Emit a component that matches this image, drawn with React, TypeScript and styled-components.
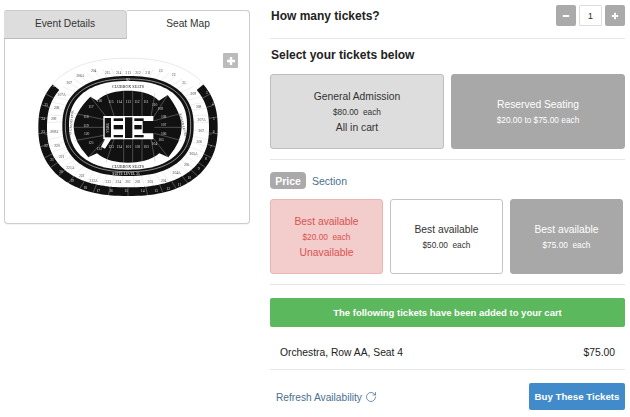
import React from "react";
import styled, { createGlobalStyle } from "styled-components";
import { RotateCw } from "lucide-react";

const Global = createGlobalStyle`
  html, body { margin: 0; padding: 0; background: #fff; }
  body { font-family: "Liberation Sans", Arial, sans-serif; color: #333; }
`;

const Page = styled.div`
  width: 630px; height: 417px; overflow: hidden; position: relative;
  display: flex; align-items: flex-start; gap: 20px; padding: 0 5px 0 4px; box-sizing: border-box;
`;
const Left = styled.div`width: 246px; padding-top: 10px; flex: none;`;
const Tabs = styled.div`display: flex; height: 29px;`;
const Tab = styled.div<{ $active?: boolean }>`
  flex: 1; display: flex; align-items: center; justify-content: center;
  font-size: 10.2px; box-sizing: border-box; color: #333;
  background: ${p => (p.$active ? "#fff" : "#ddd")};
  border: 1px solid #ccc;
  border-bottom: ${p => (p.$active ? "none" : "1px solid #bbb")};
  border-left: ${p => (p.$active ? "none" : "0")};
  border-radius: ${p => (p.$active ? "0 4px 0 0" : "3px 4px 0 0")};
  padding-bottom: 3px;
`;
const Panel = styled.div`
  height: 185px; border: 1px solid #ccc; border-top: none; border-radius: 0 0 4px 4px;
  position: relative; box-sizing: border-box;
  padding: 11px 0 0 26px;
  box-shadow: 0 1px 1px rgba(0,0,0,.05);
`;
const MapSvg = styled.svg`display: block; filter: blur(0.35px);`;
const Zoom = styled.div`
  position: absolute; left: 218px; top: 14px; width: 15px; height: 15px;
  background: #bbb; border-radius: 1px;
  color: #fff; display: flex; align-items: center; justify-content: center;
`;
const Right = styled.div`width: 355px; flex: none;`;
const HeadRow = styled.div`
  display: flex; align-items: center; justify-content: space-between;
  border-bottom: 1px solid #e6e6e6; padding-bottom: 8px; box-sizing: content-box; height: 29px; padding-top: 1px;
`;
const H = styled.h3`margin: 1px 0 0; font-size: 12px; line-height: 15px; font-weight: bold; color: #222; padding-left: 1px;`;
const Stepper = styled.div`display: flex; gap: 3px; align-items: center;`;
const StepBtn = styled.div`
  width: 20px; height: 21px; background: #aaa; border-radius: 2px; display: flex;
  align-items: center; justify-content: center;
`;
const StepVal = styled.div`
  width: 23px; height: 21px; border: 1px solid #ddd; box-sizing: border-box; display: flex;
  align-items: center; justify-content: center; font-size: 9.5px; color: #333; border-radius: 1px;
`;
const Sub = styled.div`padding: 8px 0 11px; height: 16px;`;
const CardRow = styled.div<{ $gap: number }>`display: flex; gap: ${p => p.$gap}px;`;
const Card = styled.div<{ $kind: "light" | "gray" | "pink" | "white"; $w: number }>`
  width: ${p => p.$w}px; height: 75px; box-sizing: border-box; border-radius: 3px; flex: none;
  display: flex; flex-direction: column; align-items: center; justify-content: center; padding-top: 2px;
  border: 1px solid ${p => ({ light: "#bdbdbd", gray: "#a8a8a8", pink: "#ecb5b5", white: "#c4c4c4" }[p.$kind])};
  background: ${p => ({ light: "#ddd", gray: "#a8a8a8", pink: "#f3cccc", white: "#fff" }[p.$kind])};
  color: ${p => ({ light: "#333", gray: "#fff", pink: "#d9534f", white: "#333" }[p.$kind])};
`;
const CardTitle = styled.div`font-size: 10.3px; line-height: 16px;`;
const CardPrice = styled.div`font-size: 8.3px; line-height: 15px; white-space: pre;`;
const CardNote = styled.div`font-size: 10.3px; line-height: 16px;`;
const Rule = styled.div<{ $top: number; $bottom: number }>`
  height: 1px; background: #e6e6e6; margin: ${p => p.$top}px 0 ${p => p.$bottom}px;
`;
const Pills = styled.div`display: flex; align-items: center; gap: 6px; height: 17px; margin-bottom: 10px;`;
const Pill = styled.div`
  width: 36px; height: 17px; background: #aaa; color: #fff; font-size: 10.5px; font-weight: bold; border-radius: 4px;
  display: flex; align-items: center; justify-content: center;
`;
const LinkText = styled.span`font-size: 10.5px; color: #4a6f8f;`;
const Banner = styled.div`
  height: 29px; background: #5cb85c; color: #fff; font-size: 9.5px; font-weight: bold; border-radius: 2px;
  display: flex; align-items: center; justify-content: center;
`;
const Line = styled.div`
  display: flex; align-items: center; justify-content: space-between; padding: 8px 10px 0; box-sizing: border-box;
  font-size: 10.3px; color: #222; border-bottom: 1px solid #e6e6e6; height: 43px;
`;
const Foot = styled.div`
  display: flex; align-items: center; justify-content: space-between; margin-top: 13px; padding-left: 6px;
`;
const Refresh = styled.div`display: flex; align-items: center; gap: 3px; padding-top: 1px; font-size: 10.2px; color: #4a6f8f;`;
const Buy = styled.div`
  width: 96px; height: 27px; background: #428bca; color: #fff; font-size: 9.7px; font-weight: bold;
  border-radius: 2px; display: flex; align-items: center; justify-content: center;
`;

const sgn = (v: number) => (v < 0 ? -1 : 1);
const pt = (a: number, b: number, t: number, cx = 291, cy = 232, n = 2.35): [number, number] => {
  const c = Math.cos(t), s = Math.sin(t);
  return [cx + a * sgn(c) * Math.pow(Math.abs(c), 2 / n), cy + b * sgn(s) * Math.pow(Math.abs(s), 2 / n)];
};
const arc = (a: number, b: number, t0: number, t1: number, cx = 291, cy = 232) => {
  const out: string[] = [];
  const N = 120;
  for (let i = 0; i <= N; i++) {
    const [x, y] = pt(a, b, t0 + ((t1 - t0) * i) / N, cx, cy);
    out.push(`${i ? "L" : "M"}${x.toFixed(1)} ${y.toFixed(1)}`);
  }
  return out.join("");
};
const deg = (d: number) => (d * Math.PI) / 180;

const outer: [number, number, string][] = [
  [70,112,"26"],[46,167,"25"],[36,210,"24"],[36,250,"23"],[45,292,"22"],[63,333,"21"],[90,368,"20"],[123,397,"19"],[163,417,"18"],
  [202,426,"17"],[240,426,"16"],[285,426,"15"],[335,426,"14"],[375,426,"13"],[412,420,"12"],[445,408,"11"],[475,388,"10"],[503,360,"9"],
  [525,330,"8"],[540,295,"7"],[548,250,"6"],[548,210,"5"],[545,165,"4"],[527,133,"3"],[505,105,"2"],
];
const band: [number, number, string][] = [
  [188,65,"204"],[230,72,"215"],[263,72,"214"],[292,72,"213"],[321,72,"212"],[351,72,"211"],[389,65,"23"],[428,78,"22"],[459,103,"21"],
  [148,80,"206A"],[115,102,"207"],[92,137,"207A"],[77,176,"208"],[68,211,"209"],[70,250,"209A"],[78,290,"220"],[92,325,"221"],[118,356,"221A"],
  [152,382,"222"],[188,395,"222A"],[232,398,"223"],[262,398,"224"],[291,398,"201"],[320,398,"202"],[358,398,"203"],[398,395,"204"],
  [437,373,"204A"],[467,348,"205"],[488,314,"205A"],[505,279,"206"],[511,245,"207"],[512,212,"207A"],[503,175,"208"],[487,135,"209"],
];
const bowl: [number, number, string][] = [
  [205,155,"116"],[240,158,"115"],[265,158,"114"],[292,158,"113"],[318,158,"112"],[345,158,"111"],[371,168,"110"],[388,180,"109"],
  [398,203,"108"],[398,227,"107"],[398,255,"106"],[390,273,"105"],[370,285,"104"],[345,295,"103"],[320,295,"102"],[292,295,"101"],
  [265,295,"124"],[240,295,"123"],[205,300,"122"],[180,283,"121"],[167,255,"120"],[165,230,"119"],[165,203,"118"],[180,173,"117"],
];
const spokes: [number, number, number, number][] = [
  [225,200,178,140],[225,210,130,190],[220,232,128,232],[225,255,130,272],[225,265,172,322],
  [250,200,225,125],[278,200,278,122],[305,200,305,122],[333,200,333,122],[360,200,372,130],
  [365,205,410,135],[370,212,452,190],[370,232,452,232],[370,250,452,272],[365,262,412,322],
  [250,265,225,338],[278,265,278,338],[305,265,305,338],[333,265,333,338],[360,265,372,335],
];

const Map = () => (
  <MapSvg width={200} height={150} viewBox="0 0 600 450" fontFamily="'Liberation Serif', serif">
    <path d={arc(269, 207, deg(215), deg(325), 291, 232)} fill="none" stroke="#ddd" strokeWidth={2} />
    {Array.from({ length: 60 }).map((_, i) => {
      const t = deg(i * 6 + 3);
      const [x0, y0] = pt(196, 150, t, 291, 228);
      const [x1, y1] = pt(242, 180, t, 291, 232);
      return <line key={i} x1={x0} y1={y0} x2={x1} y2={y1} stroke="#ddd" strokeWidth={1.5} />;
    })}
    <path d={arc(256, 193, deg(-35), deg(215), 291, 232)} fill="none" stroke="#111" strokeWidth={26} />
    {Array.from({ length: 25 }).map((_, i) => {
      const t = deg(-35 + ((250 * (i + 1)) / 26));
      const [x0, y0] = pt(243, 180, t);
      const [x1, y1] = pt(269, 206, t);
      return <line key={i} x1={x0} y1={y0} x2={x1} y2={y1} stroke="#999" strokeWidth={1.5} />;
    })}
    {outer.map(([x, y, s]) => <text key={s + x} x={x} y={y} fontSize={11} fill="#ddd" textAnchor="middle">{s}</text>)}
    {band.map(([x, y, s]) => <text key={s + x} x={x} y={y} fontSize={11} fill="#444" textAnchor="middle">{s}</text>)}
    <path d={arc(197, 150, 0, Math.PI * 2, 291, 228)} fill="#111" />
    <path d={arc(188, 139, 0, Math.PI * 2, 291, 226)} fill="none" stroke="#fff" strokeWidth={1.6} />
    <path d={arc(177, 133, 0, Math.PI * 2, 291, 226)} fill="#fff" />
    <path d="M178 140L198 152C222 128 260 122 291 122C322 122 360 128 384 152L410 135Q452 190 452 232Q452 275 412 322L385 310C360 332 322 338 291 338C260 338 222 332 198 310L172 322Q128 275 128 232Q128 190 178 140Z" fill="#111" />
    {spokes.map(([a, b, c, d], i) => <line key={i} x1={a} y1={b} x2={c} y2={d} stroke="#aaa" strokeWidth={1.2} />)}
    {bowl.map(([x, y, s]) => <text key={s} x={x} y={y} fontSize={11} fill="#ddd" textAnchor="middle">{s}</text>)}
    <text x={291} y={113} fontSize={12} fill="#111" textAnchor="middle">CLUBBOX SEATS</text>
    <text x={291} y={355} fontSize={12} fill="#111" textAnchor="middle">CLUBBOX SEATS</text>
    <text x={285} y={376} fontSize={11} fill="#eee" textAnchor="middle">SUITE LEVEL 35</text>
    <text x={291} y={92} fontSize={11} fill="#eee" textAnchor="middle">82</text>
    <text transform="translate(122 240) rotate(-84)" fontSize={10} fill="#333" textAnchor="middle">ROSEANNA GRAND RINK</text>
    <text transform="translate(458 245) rotate(76)" fontSize={10} fill="#333" textAnchor="middle">LOWER LEVEL 5 SEATS</text>
    <path d="M217 198H367V213H335V250H367V268H240L222 296L210 290L222 268H217Z" fill="#fff" />
    <rect x={221} y={204} width={19} height={58} fill="#111" />
    <rect x={248} y={205} width={28} height={8} fill="#111" />
    <rect x={248} y={225} width={28} height={13} fill="#111" />
    <rect x={248} y={255} width={28} height={7} fill="#111" />
    <rect x={282} y={202} width={22} height={62} fill="#111" />
    <rect x={310} y={205} width={28} height={8} fill="#111" />
    <rect x={310} y={225} width={22} height={13} fill="#111" />
    <rect x={310} y={255} width={28} height={7} fill="#111" />
    <text transform="translate(234 233) rotate(-90)" fontSize={9} fill="#eee" textAnchor="middle">STAGE</text>
  </MapSvg>
);

const PlusIcon = ({ s }: { s: number }) => (
  <svg width={s} height={s} viewBox="0 0 10 10"><path d="M5 1v8M1 5h8" stroke="#fff" strokeWidth={2.4} fill="none" /></svg>
);
const MinusIcon = () => (
  <svg width={8} height={8} viewBox="0 0 10 10"><path d="M1 5h8" stroke="#fff" strokeWidth={2.4} fill="none" /></svg>
);

export default function App() {
  return (
    <Page>
      <Global />
      <Left>
        <Tabs>
          <Tab>Event Details</Tab>
          <Tab $active>Seat Map</Tab>
        </Tabs>
        <Panel>
          <Map />
          <Zoom><PlusIcon s={10} /></Zoom>
        </Panel>
      </Left>
      <Right>
        <HeadRow>
          <H>How many tickets?</H>
          <Stepper>
            <StepBtn><MinusIcon /></StepBtn>
            <StepVal>1</StepVal>
            <StepBtn><PlusIcon s={8} /></StepBtn>
          </Stepper>
        </HeadRow>
        <Sub><H>Select your tickets below</H></Sub>
        <CardRow $gap={7}>
          <Card $kind="light" $w={174}>
            <CardTitle>General Admission</CardTitle>
            <CardPrice>$80.00  each</CardPrice>
            <CardNote>All in cart</CardNote>
          </Card>
          <Card $kind="gray" $w={174}>
            <CardTitle>Reserved Seating</CardTitle>
            <CardPrice>$20.00 to $75.00 each</CardPrice>
          </Card>
        </CardRow>
        <Rule $top={10} $bottom={12} />
        <Pills>
          <Pill>Price</Pill>
          <LinkText>Section</LinkText>
        </Pills>
        <CardRow $gap={7}>
          <Card $kind="pink" $w={113}>
            <CardTitle>Best available</CardTitle>
            <CardPrice>$20.00  each</CardPrice>
            <CardNote>Unavailable</CardNote>
          </Card>
          <Card $kind="white" $w={113}>
            <CardTitle>Best available</CardTitle>
            <CardPrice>$50.00  each</CardPrice>
          </Card>
          <Card $kind="gray" $w={113}>
            <CardTitle>Best available</CardTitle>
            <CardPrice>$75.00  each</CardPrice>
          </Card>
        </CardRow>
        <Rule $top={10} $bottom={13} />
        <Banner>The following tickets have been added to your cart</Banner>
        <Line>
          <span>Orchestra, Row AA, Seat 4</span>
          <span>$75.00</span>
        </Line>
        <Foot>
          <Refresh>Refresh Availability <RotateCw size={12} strokeWidth={1.5} /></Refresh>
          <Buy>Buy These Tickets</Buy>
        </Foot>
      </Right>
    </Page>
  );
}
